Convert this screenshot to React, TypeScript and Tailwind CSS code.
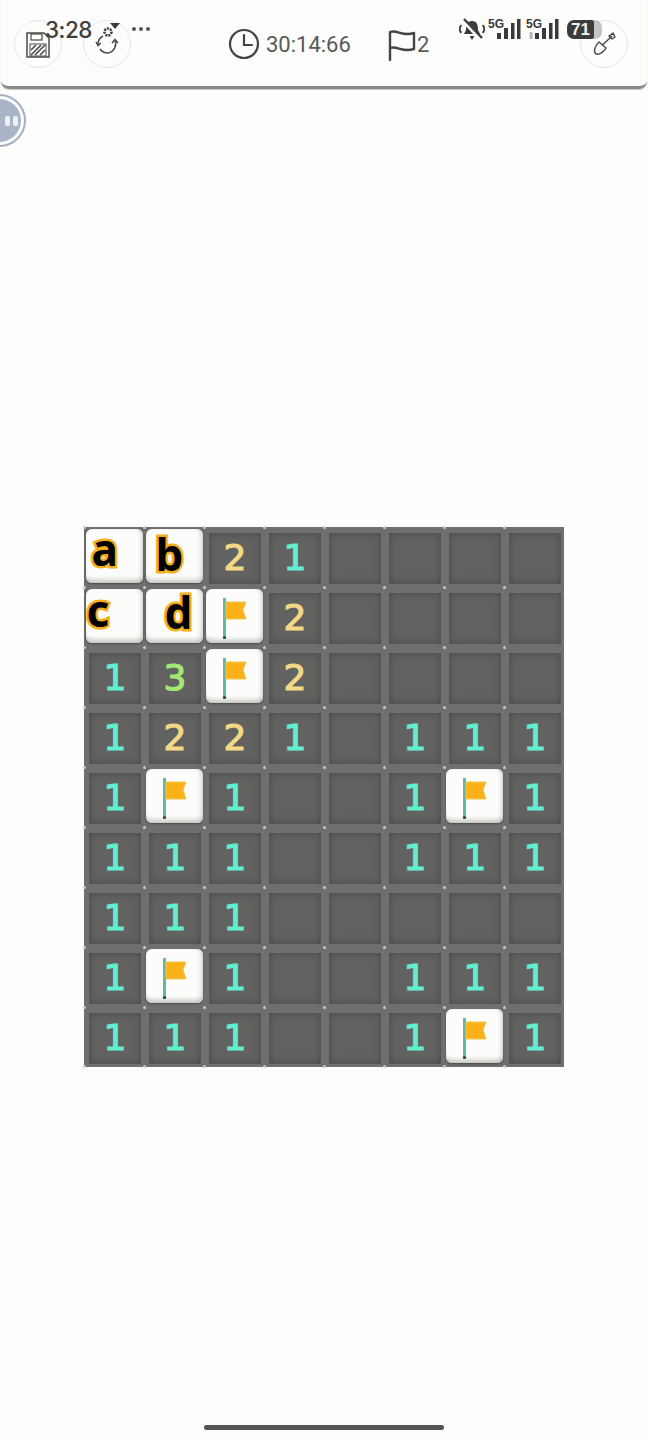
import React from 'react';

type Cell = '' | 'F' | 'a' | 'b' | 'c' | 'd' | '1' | '2' | '3';

const board: Cell[][] = [
  ['a', 'b', '2', '1', '', '', '', ''],
  ['c', 'd', 'F', '2', '', '', '', ''],
  ['1', '3', 'F', '2', '', '', '', ''],
  ['1', '2', '2', '1', '', '1', '1', '1'],
  ['1', 'F', '1', '', '', '1', 'F', '1'],
  ['1', '1', '1', '', '', '1', '1', '1'],
  ['1', '1', '1', '', '', '', '', ''],
  ['1', 'F', '1', '', '', '1', '1', '1'],
  ['1', '1', '1', '', '', '1', 'F', '1'],
];

const digitColor: Record<string, string> = {
  '1': 'text-[#62ecd0] [-webkit-text-stroke:1.2px_#62ecd0]',
  '2': 'text-[#f3d987] [-webkit-text-stroke:1.2px_#f3d987]',
  '3': 'text-[#a3e874] [-webkit-text-stroke:1.2px_#a3e874]',
};

const letterPos: Record<string, string> = {
  a: 'left-[6px] top-[-5px]',
  b: 'left-[10px] top-[0px]',
  c: 'left-[1px] top-[-4px]',
  d: 'left-[19px] top-[-2px]',
};

const Flag = () => (
  <svg width="32" height="48" viewBox="0 0 32 48">
    <rect x="5" y="6" width="3" height="41" fill="#63b7a8" />
    <circle cx="6.5" cy="45.5" r="1.6" fill="#22504a" />
    <path d="M8 10 H28 L25 18 L28 27 H8 Z" fill="#fbb117" stroke="#efc653" strokeWidth="1" />
  </svg>
);

const Tile = ({ children }: { children?: React.ReactNode }) => (
  <div className="relative w-[57px] h-[54px] mb-[2px] rounded-[6px] bg-[#fcfcfa] shadow-[inset_0_-6px_5px_-3px_#c4c4c0,inset_-4px_0_4px_-2px_#d6d6d2,0_1px_2px_#4a4a4a] flex items-center justify-center">
    {children}
  </div>
);

const BoardCell = ({ value, last }: { value: Cell; last: boolean }) => {
  const isLetter = value === 'a' || value === 'b' || value === 'c' || value === 'd';
  return (
    <div className="relative w-[60px] h-[60px] flex items-center justify-center">
      {value === 'F' ? (
        <Tile>
          <Flag />
        </Tile>
      ) : isLetter ? (
        <Tile>
          <span
            className={`absolute ${letterPos[value]} text-[44px] leading-[50px] font-bold text-black [-webkit-text-stroke:5px_#f5ae1b] [paint-order:stroke_fill] font-['Noto_Sans',sans-serif]`}
          >
            {value}
          </span>
        </Tile>
      ) : (
        <div className="w-[52px] h-[51px] ml-[2px] mt-[2px] bg-[#626260] shadow-[inset_0_0_9px_#484846] flex items-center justify-center">
          <span className={`text-[36px] leading-none font-['DejaVu_Sans',sans-serif] ${digitColor[value] ?? ''}`}>
            {value}
          </span>
        </div>
      )}
      <div className="absolute left-[-1px] top-[-1px] w-[3px] h-[3px] rounded-full bg-[#c9c9c7]" />
      {last && <div className="absolute left-[-1px] bottom-[-1px] w-[3px] h-[3px] rounded-full bg-[#c9c9c7]" />}
    </div>
  );
};

const CircleBtn = ({ children }: { children: React.ReactNode }) => (
  <div className="w-[48px] h-[48px] rounded-full border border-[#e6e6e4] flex items-center justify-center text-[#4a4a4a]">
    {children}
  </div>
);

const Signal = ({ dim }: { dim?: boolean }) => (
  <svg width="33" height="22" viewBox="0 0 33 22" className="text-[#3a3a3a]">
    <text x="0" y="10" fontSize="12" fontWeight="700" fill="currentColor" fontFamily="Liberation Sans">5G</text>
    {dim && <rect x="3.5" y="14" width="3" height="7" fill="#b5b5b3" />}
    <rect x="9" y="15" width="4" height="6" fill="currentColor" />
    <rect x="16" y="10" width="4" height="11" fill="currentColor" />
    <rect x="23" y="5" width="3.5" height="16" fill="currentColor" />
    <rect x="29" y="1" width="3.5" height="20" fill="currentColor" />
  </svg>
);

const StatusBar = () => (
  <>
    <div className="absolute left-[45px] top-[17px] text-[22.5px] leading-[26px] font-medium text-[#404040] font-['Inter',sans-serif] tracking-[-0.5px]">
      3:28
    </div>
    <svg className="absolute left-[95px] top-[20px] text-[#3a3a3a]" width="26" height="18" viewBox="0 0 26 18">
      <circle cx="13" cy="12" r="3.5" fill="none" stroke="currentColor" strokeWidth="2.5" strokeDasharray="2 1" />
      <path d="M15 3 H25 L20 9 Z" fill="currentColor" />
    </svg>
    <div className="absolute left-[132px] top-[27px] flex gap-[3px]">
      <div className="w-[4px] h-[4px] rounded-full bg-[#555]" />
      <div className="w-[4px] h-[4px] rounded-full bg-[#555]" />
      <div className="w-[4px] h-[4px] rounded-full bg-[#555]" />
    </div>
    <div className="absolute left-[459px] top-[18px] flex items-start">
      <svg width="26" height="24" viewBox="0 0 26 24" className="text-[#3a3a3a] mr-[3px]">
        <path d="M13 3 C8 3 7 7 7 12 L5 16 H21 L19 12 C19 7 18 3 13 3 Z M10.5 18 H15.5 L13 22 Z" fill="currentColor" />
        <path d="M4 2 L22 21" stroke="#fdfdfb" strokeWidth="4.5" />
        <path d="M5 1 L23 20" stroke="currentColor" strokeWidth="2.4" />
        <path d="M2 7 L0.5 11 L2 15 M24 7 L25.5 11 L24 15" fill="none" stroke="currentColor" strokeWidth="2" />
      </svg>
      <Signal />
      <div className="ml-[5px]">
        <Signal dim />
      </div>
      <div className="flex items-center ml-[8px] mt-[2px]">
        <div className="w-[27px] h-[19px] rounded-l-[7px] rounded-r-[2px] bg-[#3c3c3c] text-[#f2f2f0] text-[17px] leading-[19px] font-bold text-center font-['Liberation_Sans',sans-serif]">
          71
        </div>
        <div className="w-[8px] h-[19px] rounded-r-[7px] bg-[#c4c4c2]" />
      </div>
    </div>
  </>
);

export default function App() {
  return (
    <div className="relative w-[648px] h-[1440px] overflow-hidden bg-[#fdfdfb] font-['Roboto',sans-serif]">
      <div className="h-[89px] mx-[1px] rounded-b-[8px] border-b-[3px] border-[#8a8a86] shadow-[0_1px_1px_#c8c8c4] flex items-start justify-between pl-[13px] pr-[19px] pt-[20px]">
        <div className="flex gap-[21px]">
          <CircleBtn>
            <svg width="24" height="26" viewBox="0 0 24 26" className="mr-[1px] mt-[1px]" fill="none" stroke="currentColor">
              <path d="M1 1 H18 L23 6 V25 H1 Z" strokeWidth="1.5" />
              <rect x="5" y="2" width="11" height="6" strokeWidth="1.2" />
              <rect x="4" y="12" width="16" height="12" strokeWidth="1" />
              <path d="M5 18 L10 13 M5 23 L15 13 M9 23 L19 13 M14 23 L19 18" strokeWidth="1.6" />
            </svg>
          </CircleBtn>
          <CircleBtn>
            <svg width="24" height="24" viewBox="0 0 24 24" fill="none" stroke="currentColor" strokeWidth="1.5">
              <path d="M3 13 A9.5 9.5 0 0 1 8 4" />
              <path d="M20 8 A9.5 9.5 0 0 1 13 21 A9.5 9.5 0 0 1 5 17" />
              <path d="M1 10 L3 13.5 L6 11" />
              <path d="M17 11 L20 7.5 L23 11" />
            </svg>
          </CircleBtn>
        </div>
        <div className="flex items-center h-[48px] ml-[97px] text-[#5a5a5a] text-[22px]">
          <svg width="32" height="32" viewBox="0 0 32 32" fill="none" stroke="#444" strokeWidth="2.2" strokeLinecap="round">
            <circle cx="16" cy="16" r="14" />
            <path d="M16 7 V17 H24" />
          </svg>
          <span className="ml-[6px] w-[122px]">30:14:66</span>
          <svg width="28" height="32" viewBox="0 0 28 32" fill="none" stroke="#444" strokeWidth="2.4" strokeLinejoin="round" strokeLinecap="round" className="mt-[1px]">
            <path d="M2 31 V3 C9 0 14 8 26 4 V20 C14 24 9 16 2 19" />
          </svg>
          <span className="ml-[1px]">2</span>
        </div>
        <div className="ml-auto">
          <CircleBtn>
            <svg width="24" height="24" viewBox="0 0 24 24" fill="none" stroke="currentColor" strokeWidth="1.5" strokeLinejoin="round">
              <path d="M7 10 L14 16 C12 20 7 23 4 22 C1 20 3 13 7 10 Z" />
              <path d="M10.5 13 L20 4" />
              <path d="M17 4 L21 1 L23 5 L20 7 Z" />
            </svg>
          </CircleBtn>
        </div>
      </div>

      <StatusBar />

      <div className="absolute left-[-27px] top-[94px] w-[53px] h-[53px] rounded-full border-[2px] border-[#a4afc2] p-[3px]">
        <div className="w-full h-full rounded-full bg-[#a9b4c8] flex items-center justify-end gap-[3px] pr-[3px]">
          <div className="w-[5px] h-[10px] rounded-[2px] bg-[#eef0f4]" />
          <div className="w-[5px] h-[10px] rounded-[2px] bg-[#eef0f4]" />
        </div>
      </div>

      <div className="mt-[438px] ml-[84px] w-[480px] grid grid-cols-8 bg-[#6f6f6d]">
        {board.flat().map((value, i) => (
          <BoardCell key={i} value={value} last={i >= 64} />
        ))}
      </div>

      <div className="absolute left-[204px] top-[1425px] w-[240px] h-[5px] rounded-full bg-[#555]" />
    </div>
  );
}
